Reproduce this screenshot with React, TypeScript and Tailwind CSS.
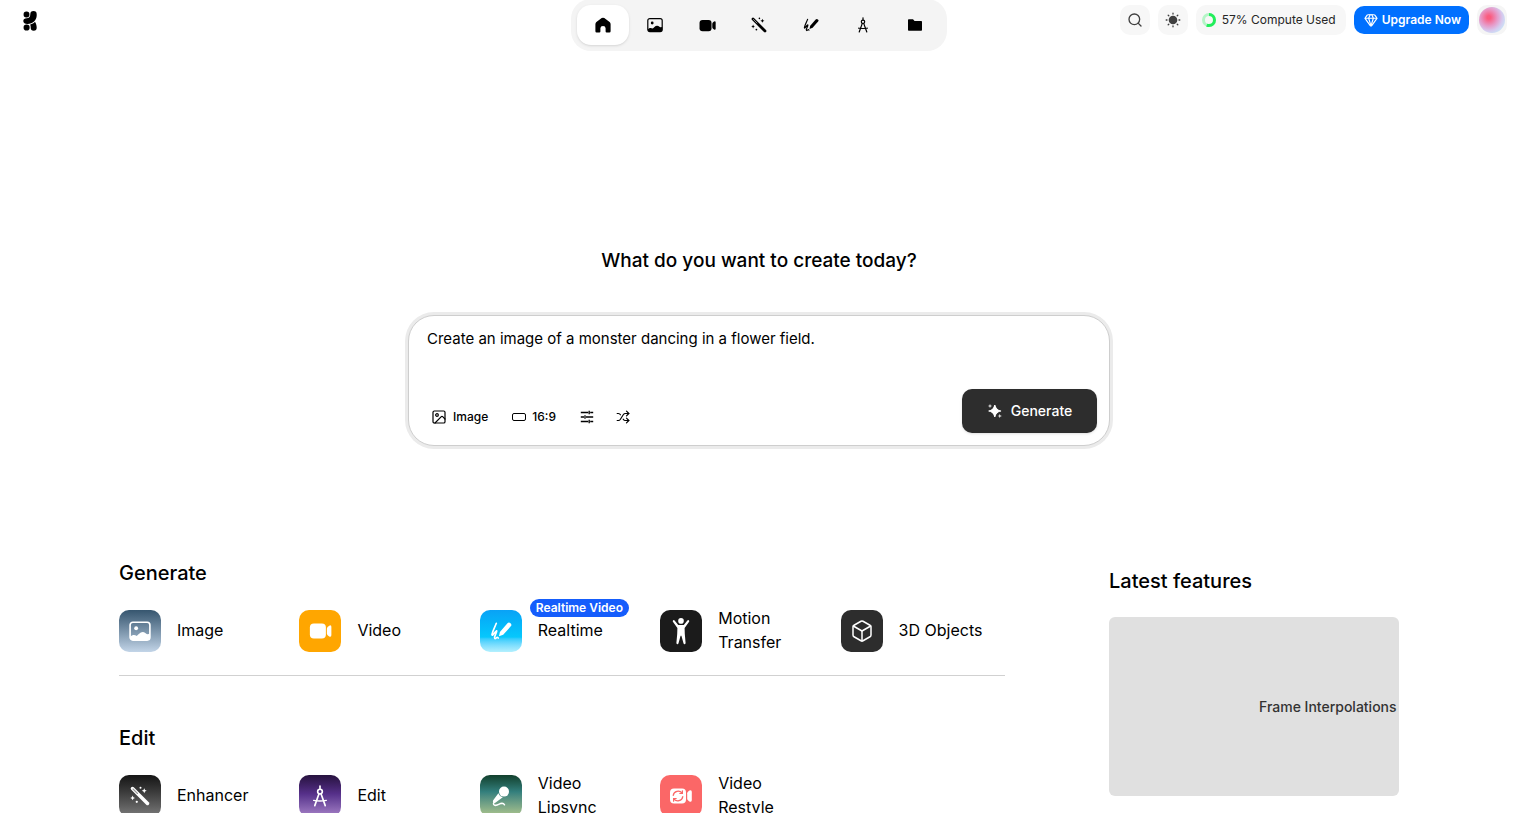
import { useState } from "react";
import type { ReactNode } from "react";
import { Box, Gem, Image as ImageOutline, Search, Shuffle } from "lucide-react";

type IconProps = { className?: string };

function LogoIcon({ className }: IconProps) {
  return (
    <svg viewBox="0 0 14 20" className={className} fill="currentColor">
      <rect x=".6" y=".5" width="5.8" height="6" rx="2.7" />
      <path d="M7.3 3.3A3.2 3.2 0 0 1 13.7 3.3V4.6C13.6 9.4 9.8 12.9 4.6 13C2.2 13.1.3 12 .3 10C.3 8.2 1.8 7.4 3.6 7.3C6.1 7.1 7.3 5.9 7.3 3.3Z" />
      <rect x=".6" y="13.6" width="6" height="6" rx="2.8" />
      <path d="M7.2 13.4C9.2 12.9 10.8 12 12 10.7C13.2 12.6 13.7 14.8 13.7 16.8A3 3 0 0 1 7.7 16.8C7.7 15.5 7.6 14.4 7.2 13.4Z" />
    </svg>
  );
}

function HomeIcon({ className }: IconProps) {
  return (
    <svg viewBox="0 0 16 16" className={className} fill="currentColor">
      <path d="M6.7 1.1Q8 .3 9.3 1.1L14.6 5Q15.6 5.8 15.6 7.2V14.2Q15.6 15.4 14.4 15.4H11.6Q10.6 15.4 10.6 14.4V11.2Q10.6 9 8 9T5.4 11.2V14.4Q5.4 15.4 4.4 15.4H1.6Q.4 15.4.4 14.2V7.2Q.4 5.8 1.4 5Z" />
    </svg>
  );
}

function PictureIcon({ className }: IconProps) {
  return (
    <svg viewBox="0 0 16 16" className={className} fill="currentColor">
      <rect x=".8" y="1.6" width="14.4" height="13" rx="2" fill="none" stroke="currentColor" strokeWidth="1.2" />
      <circle cx="5.2" cy="6" r="1.4" />
      <path d="M.9 12.3C2.4 10.6 4.2 10.6 5.6 11.6C6.6 10.9 8.2 8.6 10.2 8.7C12 8.8 12.4 10.4 13.8 10.3L15.2 9.9V12.8Q15.2 14.5 13.4 14.5H2.6Q.9 14.5.9 12.8Z" />
    </svg>
  );
}

function VideoIcon({ className }: IconProps) {
  return (
    <svg viewBox="0 0 18 16" className={className} fill="currentColor">
      <rect x=".5" y="2" width="12.8" height="12" rx="3.2" />
      <path d="M14.1 6.2Q14.1 5.2 14.9 4.5L16 3.7Q17.7 2.9 17.7 4.8V11.2Q17.7 13.1 16 12.3L14.9 11.5Q14.1 10.8 14.1 9.8Z" />
    </svg>
  );
}

function WandIcon({ className }: IconProps) {
  return (
    <svg viewBox="0 0 16 16" className={className} fill="currentColor">
      <path d="M2 2L14 14" stroke="currentColor" strokeWidth="2.8" strokeLinecap="round" />
      <path d="M2.4 2.4L6 6" stroke="#999" strokeWidth=".9" strokeLinecap="round" />
      <path d="M11.4 1.8L12 3.2L13.4 3.8L12 4.4L11.4 5.8L10.8 4.4L9.4 3.8L10.8 3.2ZM2.1 7.6L2.7 8.9L4 9.5L2.7 10.1L2.1 11.4L1.5 10.1L.2 9.5L1.5 8.9Z" />
      <circle cx="8.4" cy="1.4" r=".8" />
      <circle cx="5.4" cy="12.6" r=".9" />
    </svg>
  );
}

function PencilIcon({ className }: IconProps) {
  return (
    <svg viewBox="0 0 16 16" className={className} fill="none" stroke="currentColor">
      <path
        d="M4.6 2.4C3.6 5.2 1.9 7.8 1.4 10.6Q1.4 11.6 2.2 10.7C3 9.7 3.9 8.4 4.9 7.9C4.8 9.5 3.4 11.2 3.3 12.6Q3.5 14.3 4.8 12.9Q5.4 12.4 6 13.1"
        strokeWidth="1.2"
        strokeLinecap="round"
        strokeLinejoin="round"
      />
      <path d="M6.5 11.9L7.2 8.7L12.7 2.4Q13.7 1.4 14.9 2.4T15.1 4.6L9.6 10.7Z" fill="currentColor" stroke="none" />
    </svg>
  );
}

function CompassIcon({ className }: IconProps) {
  return (
    <svg viewBox="0 0 16 16" className={className} fill="none" stroke="currentColor" strokeLinecap="round">
      <path d="M8 .8V2.8" strokeWidth="1.2" />
      <circle cx="8" cy="4.8" r="1.7" strokeWidth="1.2" />
      <path d="M7.2 6.6L4.2 15M8.8 6.6L11.8 15" strokeWidth="1.2" />
      <path d="M3.4 11.2Q8 12 12.6 11.2" strokeWidth="1" />
    </svg>
  );
}

function FolderIcon({ className }: IconProps) {
  return (
    <svg viewBox="0 0 16 16" className={className} fill="currentColor">
      <path d="M1 3Q1 2.2 1.8 2.2H6L7.6 4H14.2Q15 4 15 4.8V13Q15 13.8 14.2 13.8H1.8Q1 13.8 1 13Z" />
    </svg>
  );
}

function SunIcon({ className }: IconProps) {
  return (
    <svg viewBox="0 0 16 16" className={className} fill="currentColor">
      <circle cx="8" cy="8" r="4.3" />
      <path
        d="M8 1.2V2M8 14V14.8M1.2 8H2M14 8H14.8M3.2 3.2L3.8 3.8M12.2 12.2L12.8 12.8M3.2 12.8L3.8 12.2M12.2 3.8L12.8 3.2"
        stroke="currentColor"
        strokeWidth="1.3"
        strokeLinecap="round"
      />
    </svg>
  );
}

function SlidersIcon({ className }: IconProps) {
  return (
    <svg viewBox="0 0 14 14" className={className} fill="none" stroke="currentColor" strokeWidth="1.3">
      <path d="M.8 2.5H8.2M10.2 2.5H13.2M9.2.8V4.2M.8 7H4M6 7H13.2M5 5.3V8.7M.8 11.5H8.2M10.2 11.5H13.2M9.2 9.8V13.2" />
    </svg>
  );
}

function SparklesIcon({ className }: IconProps) {
  return (
    <svg viewBox="0 0 16 16" className={className} fill="currentColor">
      <path d="M7.8 2Q8.6 7.2 14 8Q8.6 8.8 7.8 14Q7 8.8 1.6 8Q7 7.2 7.8 2Z" stroke="currentColor" strokeWidth="1.2" />
      <path d="M3 .8L3.5 2.5L5.2 3L3.5 3.5L3 5.2L2.5 3.5L.8 3L2.5 2.5ZM12.8 10.8L13.3 12.5L15 13L13.3 13.5L12.8 15.2L12.3 13.5L10.6 13L12.3 12.5Z" />
    </svg>
  );
}

function PersonIcon({ className }: IconProps) {
  return (
    <svg viewBox="0 0 20 30" className={className} fill="currentColor">
      <circle cx="10" cy="4.9" r="2.8" />
      <path d="M2.2 4.2Q3 3.7 3.6 4.5L7.2 9H12.8L16.4 4.5Q17 3.7 17.8 4.2T18.1 5.7L13.6 12L13.8 18L14.6 27Q14.6 28.1 13.7 28.2T12.5 27.3L10.4 19.8H9.6L7.5 27.3Q7.2 28.3 6.3 28.2T5.4 27L6.2 18L6.4 12L1.9 5.7Q1.4 4.7 2.2 4.2Z" />
    </svg>
  );
}

function MicIcon({ className }: IconProps) {
  return (
    <svg viewBox="0 0 20 22" className={className} fill="currentColor">
      <circle cx="13" cy="6.6" r="5" />
      <path d="M7.4 8.2Q8.4 11.4 11.8 12.3L4.3 17.7Q2.9 18.4 2.2 17.4T2.2 15.3Z" />
      <path d="M3 17.4C1.7 19.1 3 20.7 5.1 20.3C7.2 19.8 9.1 18.3 11 18.3Q12.7 18.4 13.5 19.8" fill="none" stroke="currentColor" strokeWidth="1.5" strokeLinecap="round" />
    </svg>
  );
}

function RestyleIcon({ className }: IconProps) {
  return (
    <svg viewBox="0 0 24 18" className={className} fill="currentColor">
      <rect x="1" y="1.5" width="16" height="15" rx="4" />
      <path d="M18.2 6.2Q18.3 5.2 19.2 4.5L20.4 3.6Q22.8 2.4 22.8 5V13Q22.8 15.6 20.4 14.4L19.2 13.5Q18.3 12.8 18.2 11.8Z" />
      <g fill="none" stroke="#fb6767" strokeWidth="1.2" strokeLinecap="round">
        <path d="M4.2 8.4A5 5 0 0 1 13.1 6.2M13.4 3.8V6.5H10.8M13.8 9.6A5 5 0 0 1 4.9 11.8M4.6 14.2V11.5H7.2" />
      </g>
    </svg>
  );
}

const navItems = [
  { label: "Home", icon: <HomeIcon className="size-4" /> },
  { label: "Image", icon: <PictureIcon className="size-4" /> },
  { label: "Video", icon: <VideoIcon className="h-[15px] w-[17px]" /> },
  { label: "Enhancer", icon: <WandIcon className="size-4" /> },
  { label: "Realtime", icon: <PencilIcon className="size-4" /> },
  { label: "Edit", icon: <CompassIcon className="size-4" /> },
  { label: "Assets", icon: <FolderIcon className="size-4" /> },
];

type Tool = { label: string; tile: string; icon: ReactNode; badge?: string };

const generateTools: Tool[] = [
  { label: "Image", tile: "bg-linear-to-b from-[#36566f] to-[#c3d5e8]", icon: <PictureIcon className="size-[22px]" /> },
  { label: "Video", tile: "bg-[#ffa600]", icon: <VideoIcon className="h-5 w-[23px]" /> },
  {
    label: "Realtime",
    tile: "bg-linear-to-b from-[#0aa2f6] via-[#06c8fc] via-65% to-[#b4f0fe]",
    icon: <PencilIcon className="size-[22px]" />,
    badge: "Realtime Video",
  },
  { label: "Motion Transfer", tile: "bg-[#1b1b1b]", icon: <PersonIcon className="h-[30px] w-5" /> },
  { label: "3D Objects", tile: "bg-[#2d2d2d]", icon: <Box className="size-6" strokeWidth={1.5} /> },
];

const editTools: Tool[] = [
  { label: "Enhancer", tile: "bg-linear-to-b from-[#151515] to-[#7c7c7c]", icon: <WandIcon className="size-5" /> },
  { label: "Edit", tile: "bg-linear-to-b from-[#27123f] via-[#56308a] via-45% to-[#a883c8]", icon: <CompassIcon className="size-[22px]" /> },
  { label: "Video Lipsync", tile: "bg-linear-to-b from-[#12402d] via-[#337f7d] via-40% to-[#b0c78c]", icon: <MicIcon className="h-[22px] w-5" /> },
  { label: "Video Restyle", tile: "bg-[#fb6767]", icon: <RestyleIcon className="h-[18px] w-6" /> },
];

function Header() {
  const [active, setActive] = useState("Home");

  return (
    <header className="grid grid-cols-[1fr_auto_1fr] items-start">
      <a href="#" aria-label="Krea" className="mt-[11px] ml-5 w-[14px]">
        <LogoIcon className="h-5 w-[14px]" />
      </a>
      <nav className="-mt-px flex rounded-[20px] bg-[#f4f4f4] p-1.5">
        {navItems.map((item) => (
          <button
            key={item.label}
            aria-label={item.label}
            onClick={() => setActive(item.label)}
            className={`flex h-10 w-[52px] items-center justify-center rounded-[14px] ${
              active === item.label ? "bg-white shadow-sm" : ""
            }`}
          >
            {item.icon}
          </button>
        ))}
      </nav>
      <div className="mt-[5px] mr-2 flex items-center justify-end gap-2 text-xs">
        <button aria-label="Search" className="flex size-[30px] items-center justify-center rounded-[10px] bg-[#f7f7f7] text-[#404040]">
          <Search className="size-4" strokeWidth={2} />
        </button>
        <button aria-label="Toggle theme" className="flex size-[30px] items-center justify-center rounded-[10px] bg-[#f7f7f7] text-[#404040]">
          <SunIcon className="size-4" />
        </button>
        <button className="flex h-[30px] items-center gap-1.5 rounded-[10px] bg-[#f7f7f7] px-1.5 pr-2.5 font-normal whitespace-nowrap text-[#262626]">
          <svg viewBox="0 0 14 14" className="size-[14px] -rotate-90" fill="none" strokeWidth="3">
            <circle cx="7" cy="7" r="5.5" stroke="#b5f5c7" />
            <circle cx="7" cy="7" r="5.5" stroke="#22ee5b" pathLength="100" strokeDasharray="57 100" />
          </svg>
          57% Compute Used
        </button>
        <button className="flex h-7 items-center gap-1 rounded-[10px] bg-[#0070ff] pr-2 pl-2.5 font-semibold whitespace-nowrap text-white">
          <Gem className="size-[14px]" strokeWidth={2} />
          Upgrade Now
        </button>
        <button aria-label="Account" className="flex size-[30px] items-center justify-center rounded-[10px] bg-[#f5f5f5]">
          <span className="size-[26px] rounded-full bg-[radial-gradient(circle_at_38%_40%,#fa5c80_8%,#e69bc9_38%,#d6c9ee_60%,#c6effb_85%)]" />
        </button>
      </div>
    </header>
  );
}

function PromptBox() {
  const [prompt, setPrompt] = useState("Create an image of a monster dancing in a flower field.");

  return (
    <form
      onSubmit={(e) => e.preventDefault()}
      className="mx-auto mt-10 w-full max-w-[702px] rounded-[26px] border border-[#cecece] bg-white p-3 pt-[11px] ring-3 ring-[#ebebeb]"
    >
      <textarea
        aria-label="Prompt"
        value={prompt}
        onChange={(e) => setPrompt(e.target.value)}
        className="block h-[62px] w-full resize-none px-1.5 text-[15px] leading-6 outline-none"
      />
      <div className="flex items-end justify-between">
        <div className="flex h-8 items-center text-xs font-medium">
          <button type="button" className="flex items-center gap-1.5 px-3 pl-2.5">
            <ImageOutline className="size-4" strokeWidth={1.8} />
            Image
          </button>
          <button type="button" className="flex items-center gap-1.5 px-3">
            <span className="h-2 w-[14px] rounded-xs border border-black" />
            16:9
          </button>
          <button type="button" aria-label="Settings" className="px-3">
            <SlidersIcon className="size-[14px]" />
          </button>
          <button type="button" aria-label="Shuffle" className="px-2.5">
            <Shuffle className="size-[14px]" strokeWidth={2} />
          </button>
        </div>
        <button
          type="submit"
          className="flex h-11 w-[135px] items-center justify-center gap-2 rounded-[10px] bg-[#2d2d2d] text-sm font-medium text-white shadow-sm"
        >
          <SparklesIcon className="size-4" />
          Generate
        </button>
      </div>
    </form>
  );
}

function ToolSection({ title, tools }: { title: string; tools: Tool[] }) {
  return (
    <section>
      <h2 className="text-xl leading-7 font-medium">{title}</h2>
      <div className="mt-5 grid grid-cols-5 gap-4">
        {tools.map((tool) => (
          <a key={tool.label} href="#" className="relative flex h-12 items-center gap-4 pr-4">
            <span className={`flex size-[42px] shrink-0 items-center justify-center rounded-[10px] text-white ${tool.tile}`}>
              {tool.icon}
            </span>
            <span className="pb-0.5 text-base leading-6">{tool.label}</span>
            {tool.badge && (
              <span className="absolute -top-2 left-[50px] rounded-full bg-[#155dfc] px-1.5 text-xs leading-[18px] font-semibold whitespace-nowrap text-white">
                {tool.badge}
              </span>
            )}
          </a>
        ))}
      </div>
    </section>
  );
}

export default function App() {
  return (
    <div className="h-screen overflow-x-hidden overflow-y-auto bg-white pl-[3px] font-['Inter','Liberation_Sans',sans-serif] text-black [scrollbar-width:none]">
      <Header />
      <main>
        <h1 className="mt-[196px] text-center text-[19px] leading-7 font-medium">What do you want to create today?</h1>
        <PromptBox />
        <div className="mx-auto mt-[113px] grid max-w-[1280px] grid-cols-[minmax(0,1fr)_290px] gap-[104px]">
          <div>
            <ToolSection title="Generate" tools={generateTools} />
            <hr className="mt-5 mb-12 border-[#d1d1d1]" />
            <ToolSection title="Edit" tools={editTools} />
          </div>
          <aside className="pt-2">
            <h2 className="text-xl leading-7 font-medium">Latest features</h2>
            <a
              href="#"
              className="mt-[22px] flex h-[179px] items-center overflow-hidden rounded-md bg-[#e0e0e0] pl-[150px] text-sm font-medium whitespace-nowrap text-[#333]"
            >
              Frame Interpolations
            </a>
          </aside>
        </div>
      </main>
    </div>
  );
}
